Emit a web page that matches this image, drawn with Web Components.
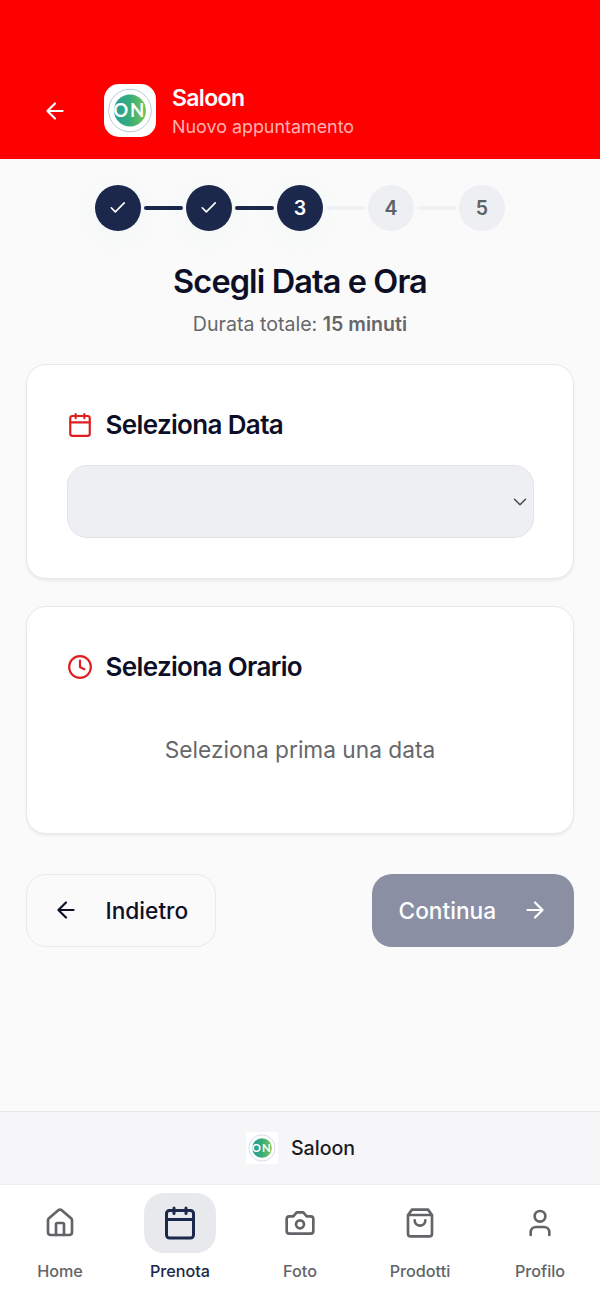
<!DOCTYPE html>
<html lang="it">
<head>
<meta charset="utf-8">
<title>Saloon</title>
<style>
html,body{margin:0;height:100%;background:#fafafa}
body{font-family:Inter,"Liberation Sans",sans-serif;color:#0d0f26}
</style>
</head>
<body>
<booking-page></booking-page>
<script>
const ICONS = {
  left: '<path d="m12 19-7-7 7-7M19 12H5"/>',
  right: '<path d="M5 12h14M12 5l7 7-7 7"/>',
  check: '<path d="M20 6 9 17l-5-5"/>',
  down: '<path d="m6 9 6 6 6-6"/>',
  calendar: '<path d="M8 2v3.700M16 2v3.700M3 9.600h18"/><rect x="3" y="3.700" width="18" height="18.300" rx="2"/>',
  clock: '<circle cx="12" cy="12" r="10"/><path d="M12 6v6l4 2"/>',
  home: '<path d="M15 21v-8a1 1 0 0 0-1-1h-4a1 1 0 0 0-1 1v8"/><path d="M3 10a2 2 0 0 1 .709-1.528l7-5.999a2 2 0 0 1 2.582 0l7 5.999A2 2 0 0 1 21 10v9a2 2 0 0 1-2 2H5a2 2 0 0 1-2-2z"/>',
  camera: '<path d="M14.5 4h-5L7 7H4a2 2 0 0 0-2 2v9a2 2 0 0 0 2 2h16a2 2 0 0 0 2-2V9a2 2 0 0 0-2-2h-3l-2.500-3z"/><circle cx="12" cy="13" r="3"/>',
  bag: '<path d="M6 2 3 6v14a2 2 0 0 0 2 2h14a2 2 0 0 0 2-2V6l-3-4ZM3 6h18M16 10a4 4 0 0 1-8 0"/>',
  user: '<path d="M19 21v-2a4 4 0 0 0-4-4H9a4 4 0 0 0-4 4v2"/><circle cx="12" cy="7" r="4"/>'
};
function define(name, render){
  customElements.define(name, class extends HTMLElement{
    connectedCallback(){
      if(this.shadowRoot) return;
      this.attachShadow({mode:'open'}).innerHTML = render(this);
    }
  });
}
define('ui-icon', el => `<style>:host{display:block;flex:none;width:var(--size,24px);height:var(--size,24px)}svg{display:block;width:100%;height:100%}</style>
<svg viewBox="0 0 24 24" fill="none" stroke="currentColor" stroke-width="${el.getAttribute('weight')||2}" stroke-linecap="round" stroke-linejoin="round">${ICONS[el.getAttribute('name')]}</svg>`);

define('brand-logo', () => `<style>:host{display:block;flex:none;background:#fff;overflow:hidden}svg{display:block;width:100%;height:100%}</style>
<svg viewBox="0 0 52 52"><defs><linearGradient id="g"><stop stop-color="#289d9c"/><stop offset=".5" stop-color="#36ad79"/><stop offset="1" stop-color="#78c655"/></linearGradient></defs>
<circle cx="26" cy="26" r="21.300" fill="none" stroke="#b0c6d2" stroke-width=".9"/>
<circle cx="26" cy="26" r="16" fill="url(#g)"/>
<text x="9.300 26" y="32.600" font-family="Lato,sans-serif" font-weight="700" font-size="18.500" fill="#fff">ON</text></svg>`);

define('app-header', () => `<style>
:host{display:flex;box-sizing:border-box;height:158.500px;background:#f00;padding:84px 42px 0;align-items:flex-start;color:#fff}
ui-icon{--size:26px;margin:14px 36px 0 0}
brand-logo{width:52px;height:53px;border-radius:15px;margin-right:16px}
b{display:block;font-weight:600;font-size:23px;line-height:28px;letter-spacing:-.65px}
span{display:block;font-size:17.900px;line-height:24px;margin-top:3px;color:#ffb0b0}
</style><ui-icon name="left"></ui-icon><brand-logo></brand-logo><div><b><slot></slot></b><span><slot name="sub"></slot></span></div>`);

define('step-list', () => {
  const parts=[];
  for(let i=1;i<=5;i++){
    parts.push(`<div class="dot ${i<=3?'on':''}">${i<3?'<ui-icon name="check"></ui-icon>':i}</div>`);
    if(i<5) parts.push(`<i class="${i<3?'on':''}"></i>`);
  }
  return `<style>
:host{display:flex;justify-content:center;align-items:center;height:46px;gap:3px}
.dot{width:46px;height:46px;border-radius:50%;display:flex;align-items:center;justify-content:center;background:#eeeff3;color:#606165;font-weight:600;font-size:19.500px}
.dot.on{background:#1b284b;color:#fff;box-shadow:0 6px 24px rgba(80,190,150,.05)}
i{width:39px;height:4px;border-radius:2px;background:#f0f1f4}i.on{background:#1b284b}
ui-icon{--size:19.500px}</style>${parts.join('')}`;
});

define('ui-card', el => `<style>
:host{display:flex;flex-direction:column;box-sizing:border-box;background:#fff;border:1.500px solid #e8e8ea;border-radius:20px;padding:43px 39.500px 0;box-shadow:0 2px 3px rgba(0,0,0,.06)}
header{display:flex;align-items:center;gap:13px;height:34px}
ui-icon{--size:26px;color:#df1f1f}
h2{margin:0;font-weight:600;font-size:26px;line-height:34px;letter-spacing:-.65px}
</style><header><ui-icon name="${el.getAttribute('icon')}"></ui-icon><h2>${el.getAttribute('heading')}</h2></header><slot></slot>`);

define('date-select', () => `<style>
:host{display:flex;box-sizing:border-box;align-items:center;justify-content:flex-end;height:73px;margin-top:23px;background:#edeff3;border:1px solid #e2e4e7;border-radius:20px;padding-right:2px;color:#44464b}
ui-icon{--size:22px}</style><ui-icon name="down" weight="1.600"></ui-icon>`);

define('nav-button', el => `<style>
:host{display:flex;box-sizing:border-box;height:72.500px;align-items:center;border-radius:20px;font-size:22.700px;font-weight:500;padding:0 26px}
:host([kind=back]){border:1.500px solid #e9e9eb;width:190px;gap:26.500px}
:host([kind=next]){background:#8a8fa4;color:#fff;width:202px;gap:26px;padding-left:26.500px}
ui-icon{--size:26px}</style>${el.getAttribute('kind')==='back'?'<ui-icon name="left"></ui-icon><slot></slot>':'<slot></slot><ui-icon name="right"></ui-icon>'}`);

define('brand-bar', () => `<style>
:host{display:flex;box-sizing:border-box;height:73px;border-top:1.500px solid #e5e6ea;background:#f6f6f9;align-items:center;justify-content:center;gap:13px;font-size:19.600px;font-weight:500;color:#1a1c24;padding-left:1px}
brand-logo{width:32px;height:32px}</style><brand-logo></brand-logo><slot></slot>`);

define('tab-item', el => `<style>
:host{display:flex;flex-direction:column;align-items:center;width:120px;color:#626468;font-size:16.200px;font-weight:500}
.pill{width:72px;height:60px;border-radius:20px;display:flex;align-items:center;justify-content:center;margin-bottom:7px}
ui-icon{--size:32px;margin-bottom:1px}
span{line-height:22px}
:host([active]){color:#1b284b}:host([active]) .pill{background:#e8e9ed}
:host([active]) ui-icon{--size:36px}</style>
<div class="pill"><ui-icon name="${el.getAttribute('icon')}"></ui-icon></div><span><slot></slot></span>`);

define('tab-bar', () => `<style>:host{display:flex;box-sizing:border-box;height:115px;background:#fff;border-top:1px solid #ececf0;padding-top:8px}</style><slot></slot>`);

define('booking-page', () => `<style>
:host{display:flex;flex-direction:column;height:1299px;width:600px;background:#fafafa;overflow:hidden}
main{flex:1;display:flex;flex-direction:column;padding:26.500px 26px 0}
h1{margin:31px 0 0;text-align:center;font-size:32.500px;line-height:40px;font-weight:600;letter-spacing:-.9px}
.duration{margin:8px 0 0;text-align:center;font-size:19.600px;line-height:28px;color:#66676b}
.duration b{font-weight:600}
.date{height:215px;margin-top:26px}.time{height:228px;margin-top:27px}
.time p{margin:50px 0 0;text-align:center;font-size:22.700px;line-height:32px;color:#66676b}
.actions{display:flex;justify-content:space-between;margin-top:40px}
</style>
<app-header>Saloon<span slot="sub">Nuovo appuntamento</span></app-header>
<main><step-list></step-list>
<h1>Scegli Data e Ora</h1><p class="duration">Durata totale: <b>15 minuti</b></p>
<ui-card class="date" icon="calendar" heading="Seleziona Data"><date-select></date-select></ui-card>
<ui-card class="time" icon="clock" heading="Seleziona Orario"><p>Seleziona prima una data</p></ui-card>
<div class="actions"><nav-button kind="back">Indietro</nav-button><nav-button kind="next">Continua</nav-button></div>
</main>
<brand-bar>Saloon</brand-bar>
<tab-bar><tab-item icon="home">Home</tab-item><tab-item icon="calendar" active>Prenota</tab-item><tab-item icon="camera">Foto</tab-item><tab-item icon="bag">Prodotti</tab-item><tab-item icon="user">Profilo</tab-item></tab-bar>`);
</script>
</body>
</html>
